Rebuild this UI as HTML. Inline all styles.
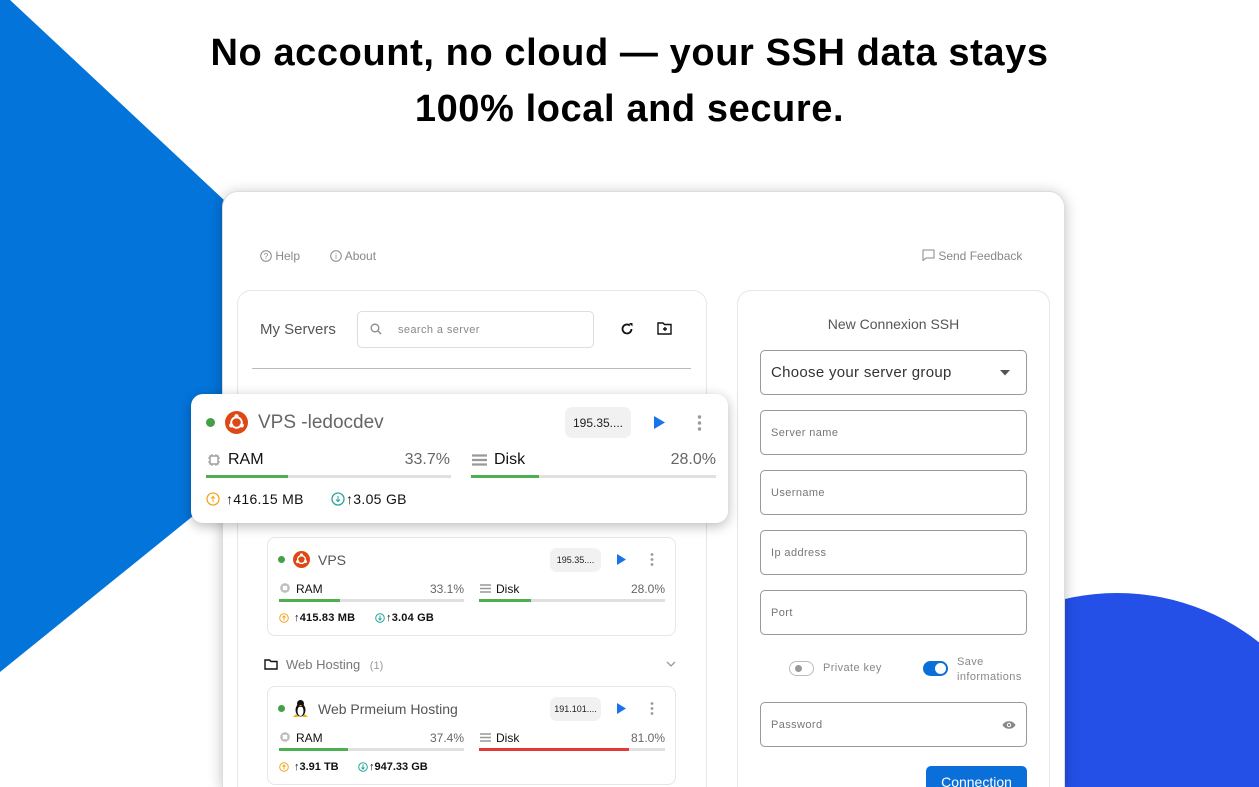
<!DOCTYPE html>
<html><head><meta charset="utf-8"><style>
*{box-sizing:border-box;margin:0;padding:0}
html,body{width:1259px;height:787px;overflow:hidden}
body{background:#fff;font-family:"Liberation Sans",sans-serif;position:relative}
.a{position:absolute}
h1{position:absolute;left:0;width:1259px;text-align:center;font-size:38px;font-weight:bold;color:#000;letter-spacing:0.6px}
.panel{left:222px;top:191px;width:843px;height:596px;background:#fff;border-radius:16px 16px 0 0;border:1px solid #ddd;border-bottom:none;box-shadow:0 2px 14px rgba(0,0,0,.25)}
.card{border:1px solid #e6e6e6;border-radius:14px;background:#fff}
.g{color:#777}
.inp{border:1px solid #999;border-radius:5px;background:#fff;left:760px;width:267px;height:45px;font-size:11px;color:#777;padding-left:10px;display:flex;align-items:center;letter-spacing:.4px}
.bar{height:3px;background:#e0e0e0;position:absolute}
.bar i{display:block;height:3px;background:#4caf50}
.ip{background:#f1f1f1;border-radius:7px;font-size:11px;color:#222;display:flex;align-items:center;justify-content:center}
.dot{width:8px;height:8px;border-radius:50%;background:#43a047}
</style></head><body>
<svg class="a" style="left:0;top:0" width="1259" height="787">
<polygon points="0,0 10,0 240,215 240,478 0,672" fill="#0374da"/>
<circle cx="1117" cy="822" r="229" fill="#2450e8"/>
</svg>
<h1 style="top:32px">No account, no cloud — your SSH data stays</h1>
<h1 style="top:88px">100% local and secure.</h1>
<div class="a panel"></div>
<div class="a g" style="left:260px;top:249px;font-size:12px;display:flex;gap:30px;color:#888">
<span><svg width="12" height="12" viewBox="0 0 12 12" style="vertical-align:-2px"><circle cx="6" cy="6" r="5.3" fill="none" stroke="#888"/><text x="6" y="9" font-size="8" text-anchor="middle" fill="#888">?</text></svg> Help</span>
<span><svg width="12" height="12" viewBox="0 0 12 12" style="vertical-align:-2px"><circle cx="6" cy="6" r="5.3" fill="none" stroke="#888"/><text x="6" y="9" font-size="8" text-anchor="middle" fill="#888">i</text></svg> About</span></div>
<div class="a" style="left:922px;top:249px;font-size:12px;color:#888"><svg width="13" height="12" viewBox="0 0 13 12" style="vertical-align:-1px"><path d="M1 1h11v8H4l-3 2.5z" fill="none" stroke="#888"/></svg> Send Feedback</div>

<div class="a card" style="left:237px;top:290px;width:470px;height:497px;border-bottom:none;border-radius:14px 14px 0 0"></div>
<div class="a card" style="left:737px;top:290px;width:313px;height:497px;border-bottom:none;border-radius:14px 14px 0 0"></div>
<div class="a" style="left:260px;top:321px;font-size:15px;color:#555">My Servers</div>
<div class="a" style="left:357px;top:311px;width:237px;height:37px;border:1px solid #ddd;border-radius:5px;font-size:11px;color:#888;padding:12px 0 0 40px;letter-spacing:.4px">search a server
<svg class="a" style="left:12px;top:11px" width="12" height="12"><circle cx="5" cy="5" r="3.8" fill="none" stroke="#888" stroke-width="1.3"/><path d="M8 8l3 3" stroke="#888" stroke-width="1.3"/></svg></div>
<svg class="a" style="left:620px;top:322px" width="14" height="14" viewBox="0 0 14 14"><path d="M11.5 7A4.5 4.5 0 1 1 10 3.6" fill="none" stroke="#111" stroke-width="1.8"/><path d="M9 1h3.5v3.5z" fill="#111"/></svg>
<svg class="a" style="left:657px;top:322px" width="15" height="13" viewBox="0 0 15 13"><path d="M1 1h5l1.5 1.5H14V12H1z" fill="none" stroke="#111" stroke-width="1.4"/><path d="M8 5v4M6 7h4" stroke="#111" stroke-width="1.4"/></svg>
<div class="a" style="left:252px;top:368px;width:439px;height:1px;background:#bbb"></div>

<!-- big card -->
<div class="a" style="left:191px;top:394px;width:537px;height:129px;background:#fff;border-radius:12px;box-shadow:0 3px 12px rgba(0,0,0,.28)"></div>
<div class="a dot" style="left:206px;top:418px;width:9px;height:9px"></div>
<svg class="a" style="left:225px;top:411px" width="23" height="23" viewBox="0 0 24 24"><circle cx="12" cy="12" r="12" fill="#dd4814"/><circle cx="12" cy="12" r="5.5" fill="none" stroke="#fff" stroke-width="2"/><circle cx="12" cy="5.5" r="2.2" fill="#fff"/><circle cx="6.5" cy="15" r="2.2" fill="#fff"/><circle cx="17.5" cy="15" r="2.2" fill="#fff"/></svg>
<div class="a" style="left:258px;top:412px;font-size:19px;color:#666">VPS -ledocdev</div>
<div class="a ip" style="left:565px;top:407px;width:66px;height:31px;font-size:12px">195.35....</div>
<svg class="a" style="left:653px;top:416px" width="12" height="13"><path d="M1 0l11 6.5L1 13z" fill="#1a73e8"/></svg>
<svg class="a" style="left:697px;top:415px" width="5" height="16"><circle cx="2.5" cy="2" r="1.7" fill="#999"/><circle cx="2.5" cy="8" r="1.7" fill="#999"/><circle cx="2.5" cy="14" r="1.7" fill="#999"/></svg>
<svg class="a" style="left:207px;top:453px" width="14" height="14"><rect x="3" y="3" width="8" height="8" fill="none" stroke="#999" stroke-width="1.4"/><path d="M5 1v2M9 1v2M5 11v2M9 11v2M1 5h2M1 9h2M11 5h2M11 9h2" stroke="#999"/></svg>
<div class="a" style="left:228px;top:451px;font-size:16px;color:#111">RAM</div>
<div class="a" style="left:380px;top:451px;width:70px;text-align:right;font-size:16px;color:#666">33.7%</div>
<div class="bar" style="left:206px;top:475px;width:245px"><i style="width:82px"></i></div>
<svg class="a" style="left:472px;top:454px" width="15" height="12"><path d="M0 1.5h15M0 6h15M0 10.5h15" stroke="#999" stroke-width="2.2"/></svg>
<div class="a" style="left:494px;top:451px;font-size:16px;color:#111">Disk</div>
<div class="a" style="left:640px;top:451px;width:76px;text-align:right;font-size:16px;color:#666">28.0%</div>
<div class="bar" style="left:471px;top:475px;width:245px"><i style="width:68px"></i></div>
<svg class="a" style="left:206px;top:492px" width="14" height="14"><circle cx="7" cy="7" r="6" fill="none" stroke="#f5a623" stroke-width="1.3"/><path d="M7 10V4.5M5 6.5l2-2 2 2" stroke="#f5a623" fill="none"/></svg>
<div class="a" style="left:226px;top:491px;font-size:14px;color:#111;letter-spacing:.3px">↑416.15 MB</div>
<svg class="a" style="left:331px;top:492px" width="14" height="14"><circle cx="7" cy="7" r="6" fill="none" stroke="#26a69a" stroke-width="1.3"/><path d="M7 4v5.5M5 7.5l2 2 2-2" stroke="#26a69a" fill="none"/></svg>
<div class="a" style="left:346px;top:491px;font-size:14px;color:#111;letter-spacing:.3px">↑3.05 GB</div>

<!-- card 2 -->
<div class="a card" style="left:267px;top:537px;width:409px;height:99px;border-radius:8px"></div>
<div class="a dot" style="left:278px;top:556px;width:7px;height:7px"></div>
<svg class="a" style="left:293px;top:551px" width="17" height="17" viewBox="0 0 24 24"><circle cx="12" cy="12" r="12" fill="#dd4814"/><circle cx="12" cy="12" r="5.5" fill="none" stroke="#fff" stroke-width="2"/><circle cx="12" cy="5.5" r="2.2" fill="#fff"/><circle cx="6.5" cy="15" r="2.2" fill="#fff"/><circle cx="17.5" cy="15" r="2.2" fill="#fff"/></svg>
<div class="a" style="left:318px;top:552px;font-size:14px;color:#555">VPS</div>
<div class="a ip" style="left:550px;top:548px;width:51px;height:24px;font-size:9px">195.35....</div>
<svg class="a" style="left:617px;top:554px" width="9" height="11"><path d="M0 0l9 5.5L0 11z" fill="#1a73e8"/></svg>
<svg class="a" style="left:650px;top:553px" width="4" height="13"><circle cx="2" cy="1.5" r="1.4" fill="#999"/><circle cx="2" cy="6.5" r="1.4" fill="#999"/><circle cx="2" cy="11.5" r="1.4" fill="#999"/></svg>
<svg class="a" style="left:280px;top:583px" width="10" height="10"><rect x="2" y="2" width="6" height="6" fill="none" stroke="#aaa" stroke-width="1.2"/><path d="M4 0v2M6 0v2M4 8v2M6 8v2M0 4h2M0 6h2M8 4h2M8 6h2" stroke="#aaa"/></svg>
<div class="a" style="left:296px;top:582px;font-size:12px;color:#111">RAM</div>
<div class="a" style="left:410px;top:582px;width:54px;text-align:right;font-size:12px;color:#666">33.1%</div>
<div class="bar" style="left:279px;top:599px;width:185px"><i style="width:61px"></i></div>
<svg class="a" style="left:480px;top:584px" width="11" height="9"><path d="M0 1h11M0 4.5h11M0 8h11" stroke="#999" stroke-width="1.6"/></svg>
<div class="a" style="left:496px;top:582px;font-size:12px;color:#111">Disk</div>
<div class="a" style="left:610px;top:582px;width:55px;text-align:right;font-size:12px;color:#666">28.0%</div>
<div class="bar" style="left:479px;top:599px;width:186px"><i style="width:52px"></i></div>
<svg class="a" style="left:279px;top:613px" width="10" height="10"><circle cx="5" cy="5" r="4.3" fill="none" stroke="#f5a623"/><path d="M5 7.5V3M3.5 4.5L5 3l1.5 1.5" stroke="#f5a623" fill="none"/></svg>
<div class="a" style="left:294px;top:612px;font-size:11px;color:#111;font-weight:bold;letter-spacing:.2px">↑415.83 MB</div>
<svg class="a" style="left:375px;top:613px" width="10" height="10"><circle cx="5" cy="5" r="4.3" fill="none" stroke="#26a69a"/><path d="M5 2.5V7M3.5 5.5L5 7l1.5-1.5" stroke="#26a69a" fill="none"/></svg>
<div class="a" style="left:386px;top:612px;font-size:11px;color:#111;font-weight:bold;letter-spacing:.2px">↑3.04 GB</div>

<!-- group -->
<svg class="a" style="left:264px;top:659px" width="14" height="11"><path d="M1 1h4.5l1.5 1.5H13V10H1z" fill="none" stroke="#111" stroke-width="1.4"/></svg>
<div class="a" style="left:286px;top:657px;font-size:13px;color:#777">Web Hosting <span style="font-size:11px;color:#999;margin-left:6px">(1)</span></div>
<svg class="a" style="left:666px;top:661px" width="10" height="6"><path d="M1 1l4 4 4-4" stroke="#999" fill="none" stroke-width="1.3"/></svg>

<!-- card 3 -->
<div class="a card" style="left:267px;top:686px;width:409px;height:99px;border-radius:8px"></div>
<div class="a dot" style="left:278px;top:705px;width:7px;height:7px"></div>
<svg class="a" style="left:292px;top:699px" width="17" height="19" viewBox="0 0 17 19"><ellipse cx="8.5" cy="11" rx="5" ry="6.5" fill="#111"/><ellipse cx="8.5" cy="12" rx="3" ry="5" fill="#fff"/><circle cx="8.5" cy="4.5" r="3.5" fill="#111"/><path d="M1 18l3-3 3 3zM10 18l3-3 3 3z" fill="#f5b301"/><path d="M7 6h3l-1.5 1.5z" fill="#f5b301"/></svg>
<div class="a" style="left:318px;top:701px;font-size:14px;color:#555">Web Prmeium Hosting</div>
<div class="a ip" style="left:550px;top:697px;width:51px;height:24px;font-size:9px">191.101....</div>
<svg class="a" style="left:617px;top:703px" width="9" height="11"><path d="M0 0l9 5.5L0 11z" fill="#1a73e8"/></svg>
<svg class="a" style="left:650px;top:702px" width="4" height="13"><circle cx="2" cy="1.5" r="1.4" fill="#999"/><circle cx="2" cy="6.5" r="1.4" fill="#999"/><circle cx="2" cy="11.5" r="1.4" fill="#999"/></svg>
<svg class="a" style="left:280px;top:732px" width="10" height="10"><rect x="2" y="2" width="6" height="6" fill="none" stroke="#aaa" stroke-width="1.2"/><path d="M4 0v2M6 0v2M4 8v2M6 8v2M0 4h2M0 6h2M8 4h2M8 6h2" stroke="#aaa"/></svg>
<div class="a" style="left:296px;top:731px;font-size:12px;color:#111">RAM</div>
<div class="a" style="left:410px;top:731px;width:54px;text-align:right;font-size:12px;color:#666">37.4%</div>
<div class="bar" style="left:279px;top:748px;width:185px"><i style="width:69px"></i></div>
<svg class="a" style="left:480px;top:733px" width="11" height="9"><path d="M0 1h11M0 4.5h11M0 8h11" stroke="#999" stroke-width="1.6"/></svg>
<div class="a" style="left:496px;top:731px;font-size:12px;color:#111">Disk</div>
<div class="a" style="left:610px;top:731px;width:55px;text-align:right;font-size:12px;color:#666">81.0%</div>
<div class="bar" style="left:479px;top:748px;width:186px"><i style="width:150px;background:#e53935"></i></div>
<svg class="a" style="left:279px;top:762px" width="10" height="10"><circle cx="5" cy="5" r="4.3" fill="none" stroke="#f5a623"/><path d="M5 7.5V3M3.5 4.5L5 3l1.5 1.5" stroke="#f5a623" fill="none"/></svg>
<div class="a" style="left:294px;top:761px;font-size:11px;color:#111;font-weight:bold">↑3.91 TB</div>
<svg class="a" style="left:358px;top:762px" width="10" height="10"><circle cx="5" cy="5" r="4.3" fill="none" stroke="#26a69a"/><path d="M5 2.5V7M3.5 5.5L5 7l1.5-1.5" stroke="#26a69a" fill="none"/></svg>
<div class="a" style="left:369px;top:761px;font-size:11px;color:#111;font-weight:bold">↑947.33 GB</div>

<!-- right form -->
<div class="a" style="left:737px;top:316px;width:313px;text-align:center;font-size:14px;color:#555">New Connexion SSH</div>
<div class="a inp" style="top:350px;font-size:15px;color:#333;letter-spacing:.3px">Choose your server group
<svg class="a" style="left:239px;top:19px" width="10" height="6"><path d="M0 0h10L5 5.5z" fill="#555"/></svg></div>
<div class="a inp" style="top:410px">Server name</div>
<div class="a inp" style="top:470px">Username</div>
<div class="a inp" style="top:530px">Ip address</div>
<div class="a inp" style="top:590px">Port</div>
<div class="a" style="left:789px;top:661px;width:25px;height:15px;border:1px solid #bbb;border-radius:8px"><div style="width:7px;height:7px;border-radius:50%;background:#999;margin:3px 0 0 5px"></div></div>
<div class="a" style="left:823px;top:662px;font-size:11px;color:#888;letter-spacing:.4px">Private key</div>
<div class="a" style="left:923px;top:661px;width:25px;height:15px;background:#0b6fd9;border-radius:8px"><div style="width:11px;height:11px;border-radius:50%;background:#fff;margin:2px 0 0 12px"></div></div>
<div class="a" style="left:957px;top:655px;font-size:11px;color:#888;line-height:15px;letter-spacing:.4px">Save<br>informations</div>
<div class="a inp" style="top:702px">Password
<svg class="a" style="left:241px;top:17px" width="14" height="10"><path d="M0.5 5C3 0 11 0 13.5 5 11 10 3 10 0.5 5z" fill="#888"/><circle cx="7" cy="5" r="2.2" fill="#fff"/><circle cx="7" cy="5" r="1.2" fill="#888"/></svg></div>
<div class="a" style="left:926px;top:766px;width:101px;height:21px;background:#0b6fd9;border-radius:5px 5px 0 0;color:#fff;font-size:14px;text-align:center;padding-top:8px;overflow:hidden;line-height:16px">Connection</div>
</body></html>
